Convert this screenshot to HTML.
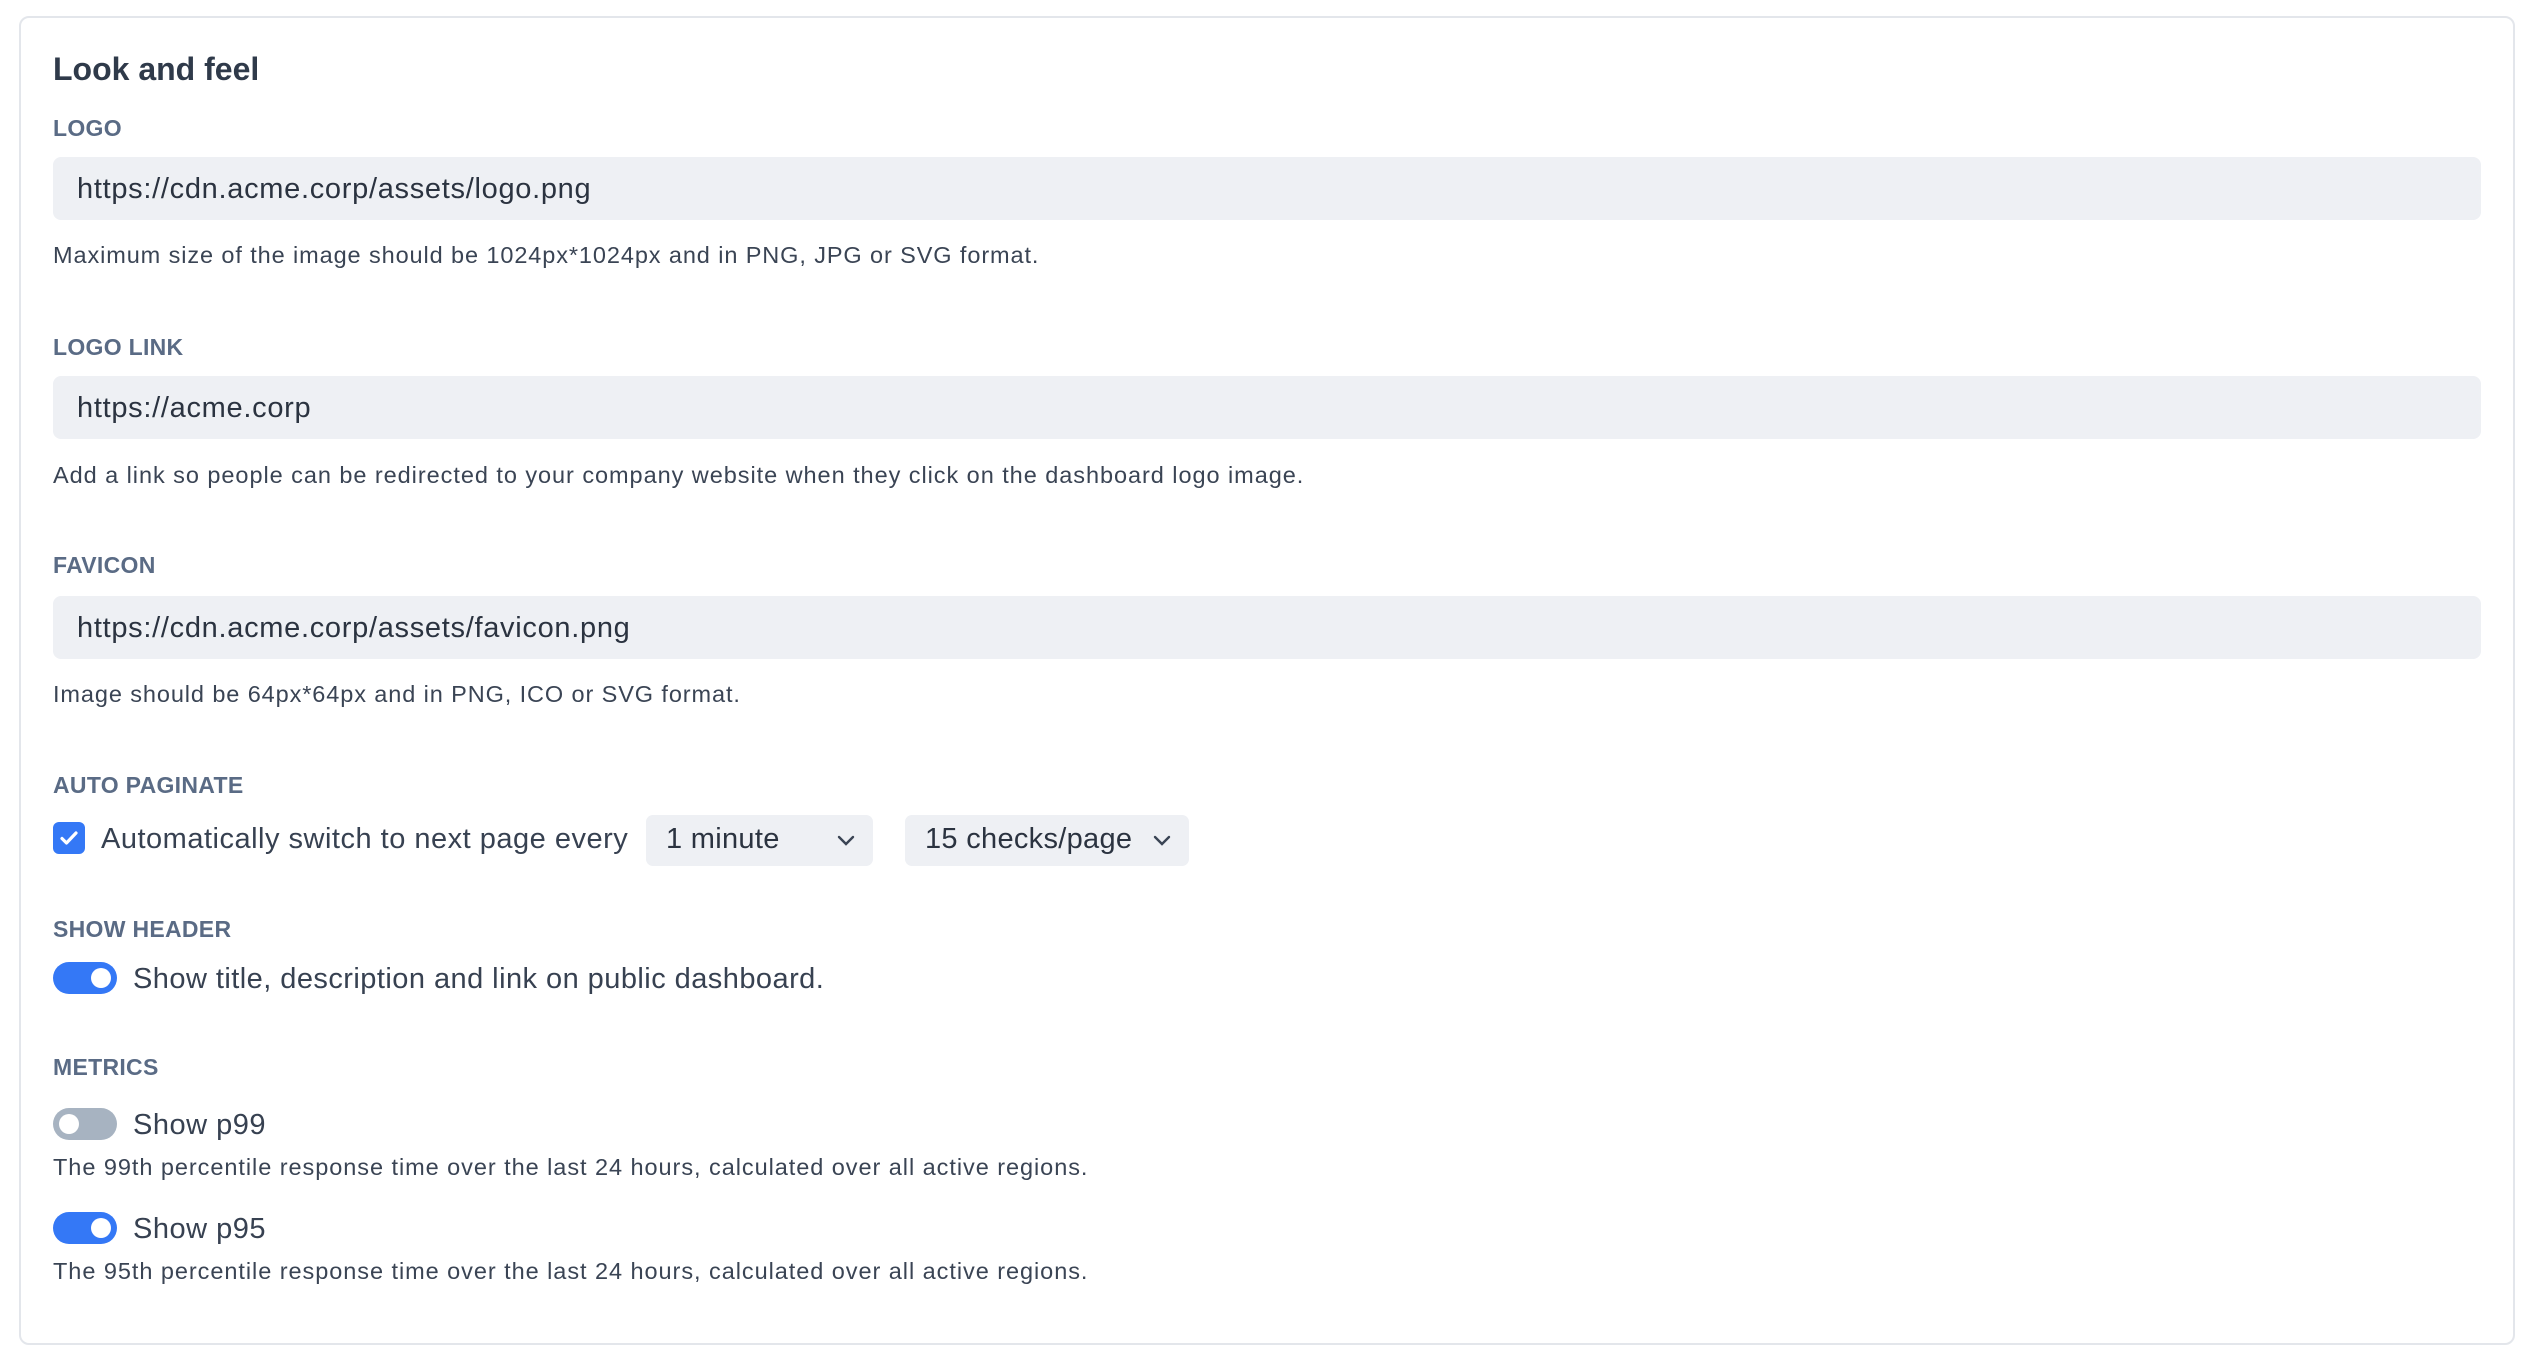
<!DOCTYPE html>
<html><head><meta charset="utf-8"><style>
*{margin:0;padding:0;box-sizing:border-box}
body{width:2532px;height:1358px;background:#fff;font-family:"Liberation Sans",sans-serif;color:#374151;position:relative;overflow:hidden}
.card{position:absolute;left:19px;top:16px;width:2496px;height:1329px;border:2px solid #e3e6eb;border-radius:10px}
.a{position:absolute;white-space:nowrap}
.t{left:53px;font-size:32px;font-weight:700;color:#2f3a4a}
.l{left:53px;font-size:23px;font-weight:700;color:#5a6b85;letter-spacing:0.3px}
.in{position:absolute;left:53px;width:2428px;height:63px;background:#eef0f4;border-radius:8px;font-size:29px;line-height:65px;padding-left:24px;color:#2b3340;letter-spacing:0.7px}
.h{left:53px;font-size:23.5px;color:#3a4454;letter-spacing:0.9px}
.tx{font-size:29px;color:#374151;letter-spacing:0.5px}
.tg{position:absolute;left:53px;width:64px;height:32px;border-radius:16px;background:#3478f6}
.tg i{position:absolute;top:6px;width:20px;height:20px;border-radius:50%;background:#fff}
.sel{position:absolute;top:815px;height:51px;background:#eef0f4;border-radius:7px;font-size:29px;line-height:49px;color:#2b3340;padding-left:20px;letter-spacing:0.3px}
.sel svg{position:absolute;top:17px}
</style></head><body>
<div class="card"></div>
<div class="a t" style="top:51px">Look and feel</div>

<div class="a l" style="top:115px">LOGO</div>
<div class="in" style="top:157px">https://cdn.acme.corp/assets/logo.png</div>
<div class="a h" style="top:242px">Maximum size of the image should be 1024px*1024px and in PNG, JPG or SVG format.</div>

<div class="a l" style="top:334px">LOGO LINK</div>
<div class="in" style="top:376px">https://acme.corp</div>
<div class="a h" style="top:462px;letter-spacing:0.95px">Add a link so people can be redirected to your company website when they click on the dashboard logo image.</div>

<div class="a l" style="top:552px">FAVICON</div>
<div class="in" style="top:596px">https://cdn.acme.corp/assets/favicon.png</div>
<div class="a h" style="top:681px">Image should be 64px*64px and in PNG, ICO or SVG format.</div>

<div class="a l" style="top:772px">AUTO PAGINATE</div>
<div class="a" style="left:53px;top:822px;width:32px;height:32px;background:#3478f6;border-radius:6px">
<svg width="32" height="32" viewBox="0 0 32 32"><path d="M9 16.5l4.5 4.5L23 11" stroke="#fff" stroke-width="3.2" fill="none" stroke-linecap="round" stroke-linejoin="round"/></svg></div>
<div class="a tx" style="left:101px;top:823px">Automatically switch to next page every</div>
<div class="sel" style="left:646px;width:227px">1 minute<svg style="left:190px" width="20" height="16" viewBox="0 0 20 16"><path d="M3 5l7 7 7-7" stroke="#3a4454" stroke-width="2.4" fill="none" stroke-linecap="round"/></svg></div>
<div class="sel" style="left:905px;width:284px">15 checks/page<svg style="left:247px" width="20" height="16" viewBox="0 0 20 16"><path d="M3 5l7 7 7-7" stroke="#3a4454" stroke-width="2.4" fill="none" stroke-linecap="round"/></svg></div>

<div class="a l" style="top:916px">SHOW HEADER</div>
<div class="tg" style="top:962px"><i style="left:38px"></i></div>
<div class="a tx" style="left:133px;top:963px;letter-spacing:0.45px">Show title, description and link on public dashboard.</div>

<div class="a l" style="top:1054px">METRICS</div>
<div class="tg" style="top:1108px;background:#a7b3c1"><i style="left:6px"></i></div>
<div class="a tx" style="left:133px;top:1109px">Show p99</div>
<div class="a h" style="top:1154px;letter-spacing:0.95px">The 99th percentile response time over the last 24 hours, calculated over all active regions.</div>
<div class="tg" style="top:1212px"><i style="left:38px"></i></div>
<div class="a tx" style="left:133px;top:1213px">Show p95</div>
<div class="a h" style="top:1258px;letter-spacing:0.95px">The 95th percentile response time over the last 24 hours, calculated over all active regions.</div>
</body></html>
